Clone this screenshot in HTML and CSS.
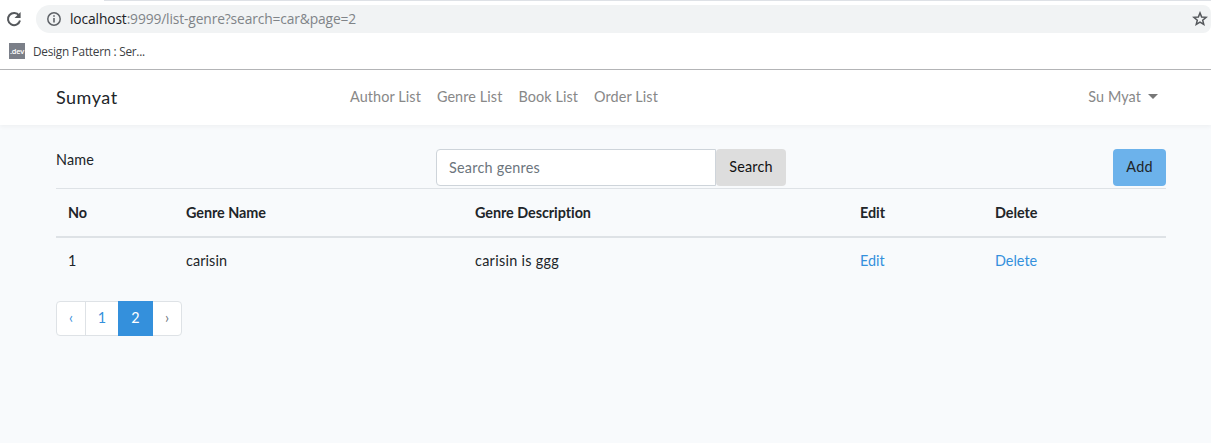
FILE: index.html
```html
<!DOCTYPE html>
<html lang="en">
<head>
<meta charset="utf-8">
<title>Genre List</title>
<link rel="stylesheet" href="styles.css">
</head>
<body>
<div class="browser">
  <div class="tab-edge"></div>
  <div class="toolbar">
    <svg class="reload" viewBox="0 0 16 16"><path d="M13.1 4.6A6.1 6.1 0 1 0 14 9.6" fill="none" stroke="#55585c" stroke-width="2"/><path d="M14.6 1v6.1H8.5z" fill="#55585c"/></svg>
    <div class="address">
      <svg class="info" viewBox="0 0 14 14"><circle cx="7" cy="7" r="6.2" fill="none" stroke="#5f6368" stroke-width="1.5"/><path d="M7 6v4.6M7 3.2v1.6" stroke="#5f6368" stroke-width="1.6"/></svg>
      <span class="url"><span class="host">localhost</span>:9999/list-genre?search=car&amp;page=2</span>
      <svg class="star" viewBox="0 0 16 16"><path d="M8 1.9l1.65 4.05 4.45.35-3.4 2.85 1.05 4.25L8 11.1l-3.75 2.3L5.3 9.15 1.9 6.3l4.45-.35z" fill="none" stroke="#55585c" stroke-width="1.5"/></svg>
    </div>
  </div>
  <div class="bookmarks">
    <span class="favicon">.dev</span>
    <span class="bookmark">Design Pattern : Ser...</span>
  </div>
</div>
<nav class="navbar">
  <a class="brand">Sumyat</a>
  <div class="links"><a>Author List</a><a>Genre List</a><a>Book List</a><a>Order List</a></div>
  <a class="user">Su Myat<span class="caret"></span></a>
</nav>
<main class="content">
  <div class="filters">
    <span class="name">Name</span>
    <form class="search"><input class="field" type="text" placeholder="Search genres"><button class="btn search-btn" type="button">Search</button></form>
    <button class="btn add-btn" type="button">Add</button>
  </div>
  <div class="table">
    <div class="row head"><span>No</span><span>Genre Name</span><span>Genre Description</span><span>Edit</span><span>Delete</span></div>
    <div class="row"><span>1</span><span>carisin</span><span class="description">carisin is ggg</span><a>Edit</a><a>Delete</a></div>
  </div>
  <div class="pagination"><a class="arrow">‹</a><a class="one">1</a><a class="active">2</a><a class="arrow next">›</a></div>
</main>
</body>
</html>
```
FILE: styles.css
```css
* { box-sizing: border-box; }
body { margin: 0; height: 443px; overflow: hidden; background: #f8fafc; color: #212529; font: 14.4px/23px Lato, "Open Sans", sans-serif; }
.browser { height: 70px; background: #fff; border-bottom: 1px solid #b4b5b7; font-family: "Open Sans", sans-serif; }
.tab-edge { height: 1px; margin-left: 104px; background: #dee1e6; }
.toolbar { height: 36px; padding: 4px 0 4px 6px; display: flex; align-items: center; }
.reload { width: 16px; height: 16px; flex: none; }
.address { height: 28px; flex: 1; margin-left: 14px; padding: 0 3px 0 11px; display: flex; align-items: center; background: #f1f3f4; border-radius: 14px 8px 8px 14px; }
.info { width: 14px; height: 14px; }
.url { margin-left: 9px; margin-top: -1px; color: #808488; font-size: 13.8px; letter-spacing: -.13px; }
.host { color: #202124; }
.star { width: 16px; height: 16px; margin-left: auto; }
.bookmarks { height: 28px; padding-left: 9px; display: flex; align-items: center; font-size: 11.8px; color: #3c4043; }
.favicon { width: 16px; height: 16px; background: #7b7f88; color: #fff; font: 600 7.5px/16px "Open Sans", sans-serif; letter-spacing: -.3px; text-align: center; }
.bookmark { margin-left: 8px; letter-spacing: -.25px; }
.navbar { position: relative; height: 55px; padding: 0 53px 2px 56px; display: flex; align-items: center; background: #fff; box-shadow: 0 2px 4px rgba(0,0,0,.04); color: #888; }
.brand { width: 294px; font-size: 18px; letter-spacing: .5px; color: #212529; padding-top: 2px; }
.links { display: flex; gap: 16px; letter-spacing: .1px; }
.user { margin-left: auto; display: flex; align-items: center; letter-spacing: .1px; }
.caret { margin-left: 7px; border: 5px solid transparent; border-top-color: #777; border-bottom: 0; }
.content { width: 1110px; margin: 24px 0 0 56px; }
.filters { height: 39px; display: flex; align-items: flex-start; }
.name { width: 380px; margin-top: -1px; letter-spacing: .2px; }
.search { display: flex; margin: 0; }
.field { width: 280px; height: 37px; padding: 6px 12px; border: 1px solid #ced4da; border-radius: 4px 0 0 4px; background: #fff; font: inherit; }
.field::placeholder { color: #6c757d; opacity: 1; letter-spacing: .25px; }
.btn { height: 37px; padding: 0 0 2px; border: 0; border-radius: 4px; font: inherit; color: #212529; }
.search-btn { width: 70px; background: #ddd; color: #111; letter-spacing: .2px; }
.add-btn { width: 53px; margin-left: auto; background: #6cb2eb; letter-spacing: .2px; }
.row { display: grid; grid-template-columns: 118px 289px 385px 135px 1fr; height: 48px; padding: 11px 12px 0; letter-spacing: .1px; }
.head { height: 50px; padding-top: 12px; border-top: 1px solid #dee2e6; border-bottom: 2px solid #dee2e6; font-weight: 700; letter-spacing: -.05px; }
.description { letter-spacing: .3px; }
.row a { color: #3490dc; letter-spacing: 0; }
.pagination { width: 126px; height: 35px; margin-top: 15px; display: flex; border: 1px solid #dee2e6; border-radius: 4px; background: #fff; color: #3490dc; line-height: 32px; text-align: center; }
.arrow { width: 28px; }
.one { width: 33px; border-left: 1px solid #dee2e6; }
.active { width: 35px; margin: -1px 0; background: #3490dc; color: #fff; line-height: 34px; }
.next { color: #6c757d; }
```
